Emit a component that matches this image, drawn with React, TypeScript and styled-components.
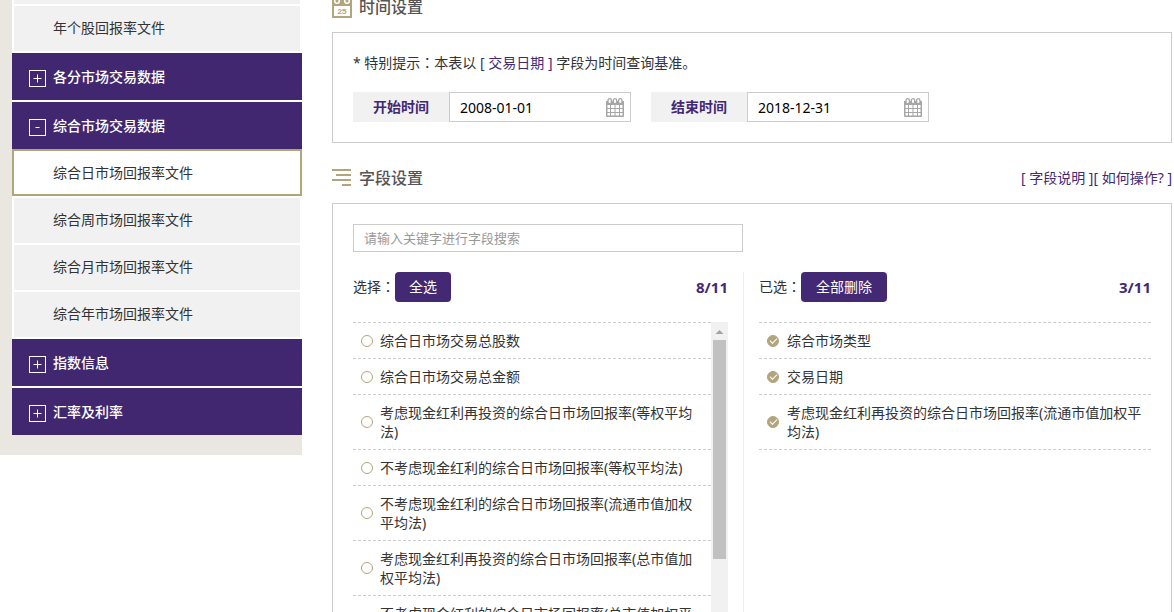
import React, { useState } from 'react';
import styled, { createGlobalStyle } from 'styled-components';

const color = {
  purple: '#412770',
  button: '#432874',
  gold: '#b1a57b',
  beige: '#e9e7df',
  grey: '#f1f1f1',
  line: '#cccccc',
  text: '#333333',
};

const GlobalStyle = createGlobalStyle`
  * { box-sizing: border-box; }
  body {
    margin: 0;
    background: #fff;
    color: ${color.text};
    font: 14px/20px "Noto Sans", "Noto Sans CJK SC", sans-serif;
  }
  button, input { font: inherit; color: inherit; }
  ul { list-style: none; margin: 0; padding: 0; }
  a { color: inherit; text-decoration: none; }
`;

const Page = styled.div`
  display: flex;
  align-items: flex-start;
  height: 100vh;
  overflow: hidden;
`;

const Sidebar = styled.nav`
  flex: 0 0 302px;
  padding: 0 0 20px 12px;
  background: ${color.beige};
`;

const Menu = styled.div`
  display: flex;
  flex-direction: column;
  gap: 2px;
  background: #fff;
`;

const FileLink = styled.a<{ $active?: boolean }>`
  display: flex;
  align-items: center;
  height: 47px;
  padding: ${p => (p.$active ? '0 0 0 39px' : '0 0 2px 39px')};
  border: 2px solid ${p => (p.$active ? color.gold : '#fff')};
  border-bottom-width: ${p => (p.$active ? '2px' : '0')};
  background: ${p => (p.$active ? '#fff' : color.grey)};
`;

const ListTail = styled.li`
  height: 4px;
  margin: 0 2px;
  background: ${color.grey};
`;

const Category = styled.button`
  display: flex;
  align-items: center;
  gap: 7px;
  width: 100%;
  height: 47px;
  padding: 0 0 0 17px;
  border: 0;
  background: ${color.purple};
  color: #fff;
  font-weight: 500;
  text-align: left;
  cursor: pointer;
`;

const ToggleIcon = styled.svg`
  width: 17px;
  height: 17px;
  margin-top: 3px;
`;

const Main = styled.main`
  flex: 1;
  min-width: 0;
  padding: 0 2px 0 30px;
`;

const SectionHead = styled.header<{ $first?: boolean }>`
  display: flex;
  align-items: center;
  justify-content: space-between;
  height: 36px;
  margin: ${p => (p.$first ? '-11px 0 7px' : '17px 0 7px')};
`;

const SectionTitle = styled.h2`
  display: flex;
  align-items: center;
  gap: 7px;
  margin: 0;
  color: #555;
  font-size: 16px;
  font-weight: 500;
`;

const HelpLinks = styled.div`
  color: ${color.button};
`;

const Panel = styled.section`
  padding: 20px;
  border: 1px solid ${color.line};
`;

const Tip = styled.p`
  margin: 0 0 19px;
`;

const Keyword = styled.span`
  color: ${color.button};
`;

const Colon = styled.span`
  font-family: "Noto Sans CJK TC", sans-serif;
  line-height: 1;
`;

const DateRow = styled.div`
  display: flex;
  gap: 20px;
`;

const DateField = styled.label`
  display: flex;
  height: 30px;
`;

const DateLabel = styled.span`
  width: 96px;
  background: ${color.grey};
  color: ${color.button};
  font-weight: 700;
  line-height: 30px;
  text-align: center;
`;

const DateBox = styled.span`
  display: flex;
  align-items: center;
  width: 182px;
  padding: 0 6px 0 10px;
  border: 1px solid ${color.line};
`;

const DateInput = styled.input`
  flex: 1;
  min-width: 0;
  padding: 2px 0 0;
  border: 0;
  outline: 0;
  color: #000;
`;

const Search = styled.input`
  display: block;
  width: 390px;
  height: 28px;
  padding: 0 10px;
  border: 1px solid ${color.line};
  font-size: 13px;
  &::placeholder { color: #999; }
`;

const Columns = styled.div`
  display: flex;
  margin-top: 20px;
`;

const Available = styled.div`
  width: 391px;
  padding-right: 15px;
  border-right: 1px solid #eee;
`;

const Chosen = styled.div`
  flex: 1;
  min-width: 0;
  padding-left: 15px;
`;

const ColumnHead = styled.div`
  display: flex;
  align-items: center;
  height: 30px;
  margin-bottom: 20px;
`;

const ActionButton = styled.button<{ $wide?: boolean }>`
  height: 30px;
  width: ${p => (p.$wide ? '86px' : '56px')};
  padding: 0;
  border: 0;
  border-radius: 4px;
  background: ${color.button};
  color: #fff;
  cursor: pointer;
`;

const Count = styled.strong`
  margin-left: auto;
  color: ${color.button};
  font-size: 15px;
`;

const ScrollArea = styled.div`
  display: flex;
  height: 372px;
  overflow: hidden;
`;

const FieldList = styled.ul`
  flex: 1;
  min-width: 0;
`;

const FieldItem = styled.li`
  border-top: 1px dashed ${color.line};
  &:last-child { border-bottom: 1px dashed ${color.line}; }
`;

const FieldLabel = styled.label<{ $chosen?: boolean }>`
  display: flex;
  align-items: center;
  gap: ${p => (p.$chosen ? '8px' : '7px')};
  padding: ${p => (p.$chosen ? '8px 4px 8px 8px' : '8px 12px 8px 8px')};
  line-height: 19px;
`;

const Check = styled.input`
  appearance: none;
  display: flex;
  flex: none;
  align-items: center;
  justify-content: center;
  width: 12px;
  height: 12px;
  margin: 0;
  border: 1px solid ${color.gold};
  border-radius: 50%;
  background: #fff;
  &:checked { background: ${color.gold}; }
  &:checked::before {
    content: '';
    width: 6px;
    height: 3px;
    margin-bottom: 2px;
    border: solid #fff;
    border-width: 0 0 1px 1px;
    transform: rotate(-45deg);
  }
`;

const ScrollTrack = styled.div`
  flex: 0 0 17px;
  padding: 0 2px;
  background: ${color.grey};
`;

const ScrollUp = styled.svg`
  display: block;
  width: 13px;
  height: 18px;
`;

const ScrollThumb = styled.div`
  height: 219px;
  background: #c1c1c1;
`;

const Toggle = ({ open }: { open?: boolean }) => (
  <ToggleIcon viewBox="0 0 17 17" fill="none" stroke="#fff" aria-hidden="true">
    <rect x=".5" y=".5" width="16" height="16" />
    {open ? <path d="M6.500 8.500H10.500" /> : <path d="M4.500 8.500H12.500M8.500 4.500V12.500" />}
  </ToggleIcon>
);

const CalendarDayIcon = () => (
  <svg width="20" height="22" viewBox="0 0 20 22" aria-hidden="true">
    <path fill={color.gold} d="M0 3h20v19H0z" />
    <path fill="#fff" d="M2 10h16v10H2z" />
    <g fill={color.gold} stroke="#fff" strokeWidth="1.500">
      <circle cx="5" cy="5" r="2.300" />
      <circle cx="15" cy="5" r="2.300" />
    </g>
    <text x="10" y="18" textAnchor="middle" fontFamily="Liberation Sans" fontWeight="700" fontSize="8" fill={color.gold}>25</text>
  </svg>
);

const FieldsIcon = () => (
  <svg width="20" height="20" viewBox="0 0 20 20" fill="none" stroke={color.gold} strokeWidth="2" aria-hidden="true">
    <path d="M0 2h19M4 7h15M0 12h19M10 17h9" />
  </svg>
);

const CalendarGridIcon = () => (
  <svg width="18" height="19" viewBox="0 0 18 19" aria-hidden="true">
    <path fill="#a6a6a6" d="M0 3h18v15q0 1-1 1H1q-1 0-1-1z" />
    <path
      fill="#fff"
      d="M1.500 7h2.500v3H1.500zM5 7h3.500v3H5zM9.500 7H13v3H9.500zM14 7h2.500v3H14zM1.500 11h2.500v3H1.500zM5 11h3.500v3H5zM9.500 11H13v3H9.500zM14 11h2.500v3H14zM1.500 15h2.500v2.500H1.500zM5 15h3.500v2.500H5zM9.500 15H13v2.500H9.500zM14 15h2.500v2.500H14z"
    />
    <g fill="#fff" stroke="#a6a6a6" strokeWidth="1.300">
      <rect x="2" y=".7" width="3.400" height="5" rx="1.700" />
      <rect x="7.300" y=".7" width="3.400" height="5" rx="1.700" />
      <rect x="12.600" y=".7" width="3.400" height="5" rx="1.700" />
    </g>
  </svg>
);

const marketFiles = ['综合日市场回报率文件', '综合周市场回报率文件', '综合月市场回报率文件', '综合年市场回报率文件'];

const availableFields = [
  '综合日市场交易总股数',
  '综合日市场交易总金额',
  '考虑现金红利再投资的综合日市场回报率(等权平均法)',
  '不考虑现金红利的综合日市场回报率(等权平均法)',
  '不考虑现金红利的综合日市场回报率(流通市值加权平均法)',
  '考虑现金红利再投资的综合日市场回报率(总市值加权平均法)',
  '不考虑现金红利的综合日市场回报率(总市值加权平均法)',
];

const chosenFields = ['综合市场类型', '交易日期', '考虑现金红利再投资的综合日市场回报率(流通市值加权平均法)'];

const DatePicker = ({ label, initial }: { label: string; initial: string }) => {
  const [value, setValue] = useState(initial);
  return (
    <DateField>
      <DateLabel>{label}</DateLabel>
      <DateBox>
        <DateInput type="text" value={value} onChange={e => setValue(e.target.value)} />
        <CalendarGridIcon />
      </DateBox>
    </DateField>
  );
};

const Fields = ({ names, chosen }: { names: string[]; chosen?: boolean }) => (
  <FieldList>
    {names.map(name => (
      <FieldItem key={name}>
        <FieldLabel $chosen={chosen}>
          <Check type="checkbox" defaultChecked={chosen} />
          <span>{name}</span>
        </FieldLabel>
      </FieldItem>
    ))}
  </FieldList>
);

export default function App() {
  const [activeFile, setActiveFile] = useState(marketFiles[0]);
  return (
    <Page>
      <GlobalStyle />
      <Sidebar>
        <Menu>
          <ul>
            <ListTail />
            <li><FileLink href="#">年个股回报率文件</FileLink></li>
          </ul>
          <Category type="button"><Toggle />各分市场交易数据</Category>
          <div>
            <Category type="button"><Toggle open />综合市场交易数据</Category>
            <ul>
              {marketFiles.map(name => (
                <li key={name}>
                  <FileLink href="#" $active={name === activeFile} onClick={() => setActiveFile(name)}>{name}</FileLink>
                </li>
              ))}
            </ul>
          </div>
          <Category type="button"><Toggle />指数信息</Category>
          <Category type="button"><Toggle />汇率及利率</Category>
        </Menu>
      </Sidebar>
      <Main>
        <SectionHead $first>
          <SectionTitle><CalendarDayIcon />时间设置</SectionTitle>
        </SectionHead>
        <Panel>
          <Tip>* 特别提示<Colon>：</Colon>本表以 <Keyword>[ 交易日期 ]</Keyword> 字段为时间查询基准。</Tip>
          <DateRow>
            <DatePicker label="开始时间" initial="2008-01-01" />
            <DatePicker label="结束时间" initial="2018-12-31" />
          </DateRow>
        </Panel>
        <SectionHead>
          <SectionTitle><FieldsIcon />字段设置</SectionTitle>
          <HelpLinks><a href="#">[ 字段说明 ]</a><a href="#">[ 如何操作? ]</a></HelpLinks>
        </SectionHead>
        <Panel>
          <Search type="text" aria-label="字段搜索" placeholder="请输入关键字进行字段搜索" />
          <Columns>
            <Available>
              <ColumnHead>
                <span>选择<Colon>：</Colon></span>
                <ActionButton type="button">全选</ActionButton>
                <Count>8/11</Count>
              </ColumnHead>
              <ScrollArea>
                <Fields names={availableFields} />
                <ScrollTrack>
                  <ScrollUp viewBox="0 0 13 18" aria-hidden="true"><path fill="#a3a3a3" d="M2.500 12l4-4 4 4z" /></ScrollUp>
                  <ScrollThumb />
                </ScrollTrack>
              </ScrollArea>
            </Available>
            <Chosen>
              <ColumnHead>
                <span>已选<Colon>：</Colon></span>
                <ActionButton type="button" $wide>全部删除</ActionButton>
                <Count>3/11</Count>
              </ColumnHead>
              <Fields names={chosenFields} chosen />
            </Chosen>
          </Columns>
        </Panel>
      </Main>
    </Page>
  );
}
